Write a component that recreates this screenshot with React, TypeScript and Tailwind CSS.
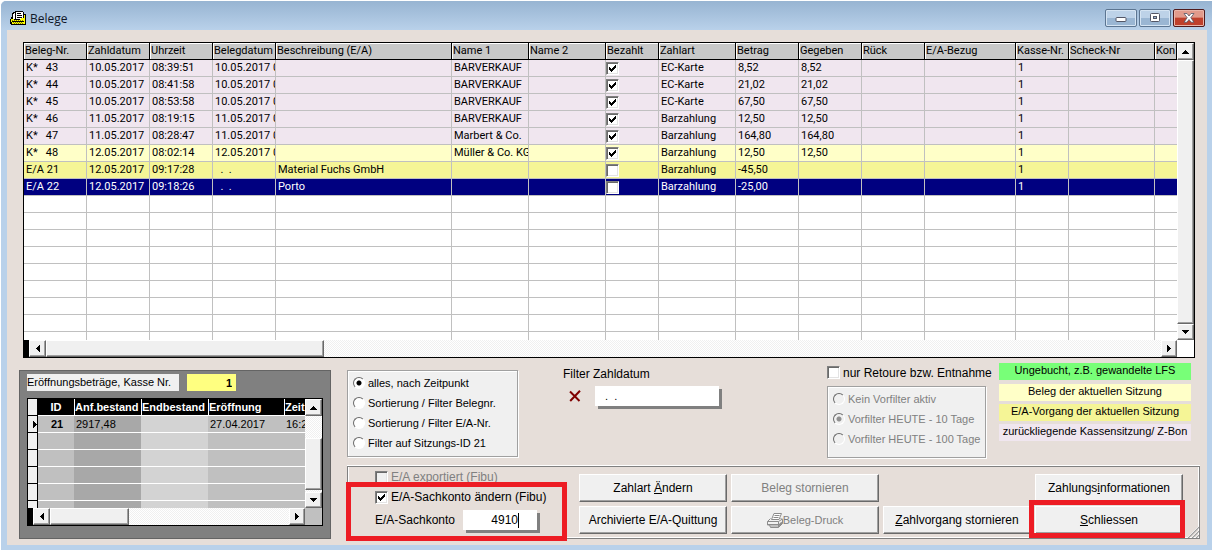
import type { ReactNode } from 'react';
import clsx from 'clsx';

type RowKind = 'past' | 'current' | 'ea' | 'selected';

interface Beleg {
  kind: RowKind;
  nr: string;
  zahldatum: string;
  uhrzeit: string;
  belegdatum: string;
  beschreibung?: string;
  name?: string;
  bezahlt: boolean;
  zahlart: string;
  betrag: string;
  gegeben?: string;
}

const belege: Beleg[] = [
  { kind: 'past', nr: 'K*   43', zahldatum: '10.05.2017', uhrzeit: '08:39:51', belegdatum: '10.05.2017 0', name: 'BARVERKAUF', bezahlt: true, zahlart: 'EC-Karte', betrag: '8,52', gegeben: '8,52' },
  { kind: 'past', nr: 'K*   44', zahldatum: '10.05.2017', uhrzeit: '08:41:58', belegdatum: '10.05.2017 0', name: 'BARVERKAUF', bezahlt: true, zahlart: 'EC-Karte', betrag: '21,02', gegeben: '21,02' },
  { kind: 'past', nr: 'K*   45', zahldatum: '10.05.2017', uhrzeit: '08:53:58', belegdatum: '10.05.2017 0', name: 'BARVERKAUF', bezahlt: true, zahlart: 'EC-Karte', betrag: '67,50', gegeben: '67,50' },
  { kind: 'past', nr: 'K*   46', zahldatum: '11.05.2017', uhrzeit: '08:19:15', belegdatum: '11.05.2017 0', name: 'BARVERKAUF', bezahlt: true, zahlart: 'Barzahlung', betrag: '12,50', gegeben: '12,50' },
  { kind: 'past', nr: 'K*   47', zahldatum: '11.05.2017', uhrzeit: '08:28:47', belegdatum: '11.05.2017 0', name: 'Marbert & Co.', bezahlt: true, zahlart: 'Barzahlung', betrag: '164,80', gegeben: '164,80' },
  { kind: 'current', nr: 'K*   48', zahldatum: '12.05.2017', uhrzeit: '08:02:14', belegdatum: '12.05.2017 0', name: 'Müller & Co. KG', bezahlt: true, zahlart: 'Barzahlung', betrag: '12,50', gegeben: '12,50' },
  { kind: 'ea', nr: 'E/A 21', zahldatum: '12.05.2017', uhrzeit: '09:17:28', belegdatum: '  .  .', beschreibung: 'Material Fuchs GmbH', bezahlt: false, zahlart: 'Barzahlung', betrag: '-45,50' },
  { kind: 'selected', nr: 'E/A 22', zahldatum: '12.05.2017', uhrzeit: '09:18:26', belegdatum: '  .  .', beschreibung: 'Porto', bezahlt: false, zahlart: 'Barzahlung', betrag: '-25,00' },
];

const rowStyle: Record<RowKind, string> = {
  past: 'bg-[#f0e6ef]',
  current: 'bg-[#ffffc8]',
  ea: 'bg-[#f5f596]',
  selected: 'bg-[#000080] text-white',
};

// the last column takes whatever is left
const columns = [
  { title: 'Beleg-Nr.', width: 'w-[63px]' },
  { title: 'Zahldatum', width: 'w-[63px]' },
  { title: 'Uhrzeit', width: 'w-[63px]' },
  { title: 'Belegdatum', width: 'w-[63px]' },
  { title: 'Beschreibung (E/A)', width: 'w-[176px]' },
  { title: 'Name 1', width: 'w-[77px]' },
  { title: 'Name 2', width: 'w-[77px]' },
  { title: 'Bezahlt', width: 'w-[53px]' },
  { title: 'Zahlart', width: 'w-[77px]' },
  { title: 'Betrag', width: 'w-[63px]' },
  { title: 'Gegeben', width: 'w-[63px]' },
  { title: 'Rück', width: 'w-[63px]' },
  { title: 'E/A-Bezug', width: 'w-[91px]' },
  { title: 'Kasse-Nr.', width: 'w-[53px]' },
  { title: 'Scheck-Nr', width: 'w-[86px]' },
  { title: 'Kon', width: '' },
];

const legend = [
  { text: 'Ungebucht, z.B. gewandelte LFS', style: 'bg-[#78ff78] mb-1' },
  { text: 'Beleg der aktuellen Sitzung', style: 'bg-[#ffffc8] mb-[3px]' },
  { text: 'E/A-Vorgang der aktuellen Sitzung', style: 'bg-[#f5f596] mb-[3px]' },
  { text: 'zurückliegende Kassensitzung/ Z-Bon', style: 'bg-[#f0e6ef]' },
];

const raised =
  'bg-[#f0f0f0] border border-t-white border-l-white border-r-[#696969] border-b-[#696969] shadow-[inset_-1px_-1px_0_#a0a0a0]';

const track = 'bg-[repeating-conic-gradient(#ffffff_0_25%,#f0f0f0_0_50%)] bg-[length:2px_2px]';

function Check({ checked, label, disabled }: { checked?: boolean; label?: string; disabled?: boolean }) {
  return (
    <span className="relative block size-[13px] shrink-0">
      <input
        type="checkbox"
        aria-label={label}
        defaultChecked={checked}
        disabled={disabled}
        className="peer block size-[13px] appearance-none border border-t-[#808080] border-l-[#808080] border-r-white border-b-white bg-white shadow-[inset_1px_1px_0_#696969,inset_-1px_-1px_0_#e3e3e3] disabled:bg-[#f0f0f0]"
      />
      <svg
        viewBox="0 0 13 13"
        shapeRendering="crispEdges"
        className="pointer-events-none absolute inset-0 hidden size-[13px] peer-checked:block"
      >
        <path d="M3 5h1v1h1v1h1v-1h1v-1h1v-1h1v-1h1v3h-1v1h-1v1h-1v1h-1v1h-1v-1h-1v-1h-1z" fill="#000" />
      </svg>
    </span>
  );
}

function Radio({ name, children, checked, disabled }: { name: string; children: ReactNode; checked?: boolean; disabled?: boolean }) {
  return (
    <label className={clsx('flex h-5 items-center gap-[3px] text-[11px]', disabled && 'text-[#808080]')}>
      <input
        type="radio"
        name={name}
        defaultChecked={checked}
        disabled={disabled}
        className="size-3 shrink-0 appearance-none rounded-full border border-t-[#696969] border-l-[#696969] border-r-white border-b-white bg-white checked:bg-[radial-gradient(circle,#000_2px,#fff_3px)] disabled:bg-[#f0f0f0] checked:disabled:bg-[radial-gradient(circle,#909090_2px,#f0f0f0_3px)]"
      />
      {children}
    </label>
  );
}

const arrows = {
  up: 'M4 0h1v1h1v1h1v1h1v1H1V3h1V2h1V1h1z',
  down: 'M1 0h7v1h-1v1h-1v1h-1v1h-1V3H3V2H2V1H1z',
  left: 'M3 1h1v7h-1V7h-1V6h-1V5h-1V4h1V3h1V2h1z',
  right: 'M0 1h1v1h1v1h1v1h1v1h-1v1h-1v1h-1v1H0z',
};

function ArrowButton({ dir, className }: { dir: keyof typeof arrows; className?: string }) {
  const vertical = dir === 'up' || dir === 'down';
  return (
    <button type="button" aria-label={`scroll ${dir}`} className={clsx(raised, 'flex shrink-0 items-center justify-center', className)}>
      <svg
        viewBox={vertical ? '0 0 9 4' : '0 0 4 9'}
        shapeRendering="crispEdges"
        className={vertical ? 'h-1 w-[9px]' : 'h-[9px] w-1'}
      >
        <path d={arrows[dir]} />
      </svg>
    </button>
  );
}

function PushButton({ children, disabled }: { children: ReactNode; disabled?: boolean }) {
  return (
    <button
      type="button"
      disabled={disabled}
      className={clsx(raised, 'flex h-7 w-full items-center justify-center text-[12px] whitespace-nowrap disabled:text-[#808080]')}
    >
      {children}
    </button>
  );
}

function FolderIcon() {
  return (
    <svg viewBox="0 0 16 14" shapeRendering="crispEdges" className="h-[14px] w-4">
      <path d="M5 0h8v1h1v2h2v11H1v-1H0V8h1V6h1V2h1V1h2z" fill="#000" />
      <path d="M3 3h1v5H3zM4 2h1v6H4zM6 1h7v7H6z" fill="#fff" />
      <path d="M5 2h1v6H5zM7 2h4v1H7zM7 4h5v1H7zM7 6h5v1H7z" fill="#000" />
      <path d="M1 8h3v1h6V8h1V7h3V4h1v9H2v-2H1z" fill="#ffff00" />
      <path d="M2 10h12v1H2z" fill="#000" />
      <path d="M3 11h1v1H3zM5 11h1v1H5zM7 11h1v1H7zM9 11h1v1H9zM11 11h1v1h-1zM4 12h1v1H4zM6 12h1v1H6zM8 12h1v1H8zM10 12h1v1h-1zM12 12h1v1h-1zM2 9h1v1H2zM4 9h1v1H4zM6 9h1v1H6zM8 9h1v1H8zM10 9h1v1h-1zM12 9h1v1h-1z" fill="#808000" />
    </svg>
  );
}

function PrinterIcon() {
  return (
    <svg viewBox="0 0 16 15" className="h-[15px] w-4" fill="none" stroke="#8c8c8c">
      <path d="M4.500 6.500 7 .5h7.500L12 6.500z" fill="#fff" />
      <path d="M7.500 2.500h5M6.500 4.500h5" />
      <path d="M3.500 5.500.500 8.500v3.500h2l1 2.500h8l4-4V6.500l-2-1" />
      <path d="M.500 8.500h11l4-2.500M11.500 8.500v6M1 11.500h10M3 13h8" />
      <path d="m12 12.500 3-3" strokeWidth="2" />
    </svg>
  );
}

function TitleBar() {
  return (
    <header className="flex h-[30px] items-start bg-linear-to-b from-[#96b3d1] to-[#b9d1ea] pr-[7px] pl-[9px]">
      <div className="mt-[11px]">
        <FolderIcon />
      </div>
      <h1 className="mt-[11px] ml-1 flex-1 font-['Open_Sans',sans-serif] text-[12px] leading-4 text-[#101828]">Belege</h1>
      <div className="mt-[9px] flex gap-[2px]">
        <button
          type="button"
          aria-label="Minimieren"
          className="flex h-[18px] w-8 items-center justify-center rounded-[2px] border border-[#5c7591] bg-linear-to-b from-[#bdd2e8] from-50% to-[#9ab6d3] to-50% shadow-[inset_0_0_0_1px_#d5e4f3]"
        >
          <svg viewBox="0 0 12 10" className="h-[10px] w-3">
            <rect x="1" y="4.500" width="10" height="4" rx="1" fill="#fff" stroke="#535666" />
          </svg>
        </button>
        <button
          type="button"
          aria-label="Maximieren"
          className="flex h-[18px] w-8 items-center justify-center rounded-[2px] border border-[#5c7591] bg-linear-to-b from-[#bdd2e8] from-50% to-[#9ab6d3] to-50% shadow-[inset_0_0_0_1px_#d5e4f3]"
        >
          <svg viewBox="0 0 12 10" className="h-[10px] w-3">
            <rect x="1.500" y=".5" width="9" height="8" rx="1" fill="#fff" stroke="#535666" />
            <rect x="4.500" y="3.500" width="3" height="2" fill="#9ab6d3" stroke="#535666" />
          </svg>
        </button>
        <button
          type="button"
          aria-label="Fenster schliessen"
          className="flex h-[18px] w-8 items-center justify-center rounded-[2px] border border-[#4f1a1c] bg-linear-to-b from-[#e19a8b] from-45% to-[#bf402c] to-50% shadow-[inset_0_0_0_1px_#eab5a9]"
        >
          <svg viewBox="0 0 12 10" className="h-[10px] w-3">
            <path d="M1 .5h3l2 2.500 2-2.500h3L7.800 4.700 11 9.200H8L6 6.500 4 9.200H1l3.200-4.500z" fill="#fff" stroke="#535666" strokeWidth=".8" />
          </svg>
        </button>
      </div>
    </header>
  );
}

function BelegTable() {
  const cell = 'h-[17px] overflow-hidden border-r border-b border-[#c0c0c0] p-0 pl-[2px] leading-4 whitespace-pre last:border-r-0';

  return (
    <section className="mr-3 ml-4 border border-black bg-white font-[Roboto,Arial,sans-serif] text-[11px]">
      <div className="flex">
        <div className="h-[297px] min-w-0 flex-1 overflow-hidden">
          <table className="w-full table-fixed border-separate border-spacing-0">
            <thead>
              <tr>
                {columns.map((col) => (
                  <th
                    key={col.title}
                    className={clsx(
                      col.width,
                      'h-[17px] overflow-hidden border-r border-b border-black bg-[#c8c8c8] p-0 pl-px text-left leading-4 font-normal whitespace-nowrap shadow-[inset_1px_1px_0_#fff]'
                    )}
                  >
                    {col.title}
                  </th>
                ))}
              </tr>
            </thead>
            <tbody>
              {belege.map((b) => (
                <tr key={b.nr} className={rowStyle[b.kind]}>
                  <td className={cell}>{b.nr}</td>
                  <td className={cell}>{b.zahldatum}</td>
                  <td className={cell}>{b.uhrzeit}</td>
                  <td className={cell}>{b.belegdatum}</td>
                  <td className={cell}>{b.beschreibung}</td>
                  <td className={cell}>{b.name}</td>
                  <td className={cell} />
                  <td className="h-[17px] border-r border-b border-[#c0c0c0] p-0">
                    <Check checked={b.bezahlt} label={`Bezahlt ${b.nr}`} />
                  </td>
                  <td className={cell}>{b.zahlart}</td>
                  <td className={cell}>{b.betrag}</td>
                  <td className={cell}>{b.gegeben}</td>
                  <td className={cell} />
                  <td className={cell} />
                  <td className={cell}>1</td>
                  <td className={cell} />
                  <td className={cell} />
                </tr>
              ))}
              {Array.from({ length: 9 }, (_, i) => (
                <tr key={i}>
                  {columns.map((col) => (
                    <td key={col.title} className={cell} />
                  ))}
                </tr>
              ))}
            </tbody>
          </table>
        </div>
        <div className="flex w-[17px] flex-col">
          <ArrowButton dir="up" className="h-[17px]" />
          <div className={clsx(raised, 'flex-1')} />
          <ArrowButton dir="down" className="h-4" />
        </div>
      </div>
      <div className="flex h-[17px]">
        <div className="w-[5px] bg-black" />
        <ArrowButton dir="left" className="w-[17px]" />
        <div className={clsx('flex-1', track)}>
          <div className={clsx(raised, 'h-full w-[278px]')} />
        </div>
        <ArrowButton dir="right" className="w-4" />
        <div className="w-[17px] bg-white" />
      </div>
    </section>
  );
}

function OpeningBalances() {
  const head = 'h-[17px] overflow-hidden border-b border-l border-white bg-black p-0 text-left font-bold text-white whitespace-nowrap leading-4';
  const body = 'h-[17px] overflow-hidden border-b border-white p-0 pl-[2px] whitespace-nowrap leading-4';

  return (
    <section className="mt-[7px] w-[312px] shrink-0 border border-[#646464] bg-[#808080] px-[7px] pt-[3px] text-[11px]">
      <div className="flex gap-2">
        <label htmlFor="kasse" className="h-[17px] w-[152px] bg-[#f0f0f0] leading-4">
          Eröffnungsbeträge, Kasse Nr.
        </label>
        <input id="kasse" defaultValue="1" className="h-[17px] w-[49px] bg-[#ffff80] pr-1 text-right font-bold" />
      </div>
      <div className="mt-[7px] border border-black bg-[#c0c0c0]">
        <div className="flex">
          <div className="h-[109px] min-w-0 flex-1 overflow-hidden">
            <table className="w-full table-fixed border-separate border-spacing-0">
              <thead>
                <tr>
                  <th className="h-[17px] w-[10px] border-r border-b border-black bg-[#f0f0f0] p-0" />
                  <th className="h-[17px] w-9 border-b border-white bg-black p-0 text-center leading-4 font-bold text-white">ID</th>
                  <th className={clsx(head, 'w-[67px]')}>Anf.bestand</th>
                  <th className={clsx(head, 'w-[67px]')}>Endbestand</th>
                  <th className={clsx(head, 'w-[76px]')}>Eröffnung</th>
                  <th className={head}>Zeit</th>
                </tr>
              </thead>
              <tbody>
                {Array.from({ length: 6 }, (_, i) => (
                  <tr key={i}>
                    <td className="h-[17px] border-r border-b border-black bg-[#f0f0f0] p-0 pl-[5px]">
                      {i === 0 && (
                        <svg viewBox="0 0 4 9" shapeRendering="crispEdges" className="h-[9px] w-1">
                          <path d={arrows.right} />
                        </svg>
                      )}
                    </td>
                    <td className={clsx(body, 'bg-[#c0c0c0] text-center font-bold')}>{i === 0 && '21'}</td>
                    <td className={clsx(body, 'bg-[#a8a8a8]')}>{i === 0 && '2917,48'}</td>
                    <td className={clsx(body, 'bg-[#d3d3d3]')} />
                    <td className={clsx(body, 'bg-[#c0c0c0]')}>{i === 0 && '27.04.2017'}</td>
                    <td className={clsx(body, 'bg-[#c0c0c0]')}>{i === 0 && '16:2'}</td>
                  </tr>
                ))}
              </tbody>
            </table>
          </div>
          <div className={clsx('flex w-[17px] flex-col', track)}>
            <ArrowButton dir="up" className="h-[17px]" />
            <div className={clsx(raised, 'mt-[22px] mb-[2px] flex-1')} />
            <ArrowButton dir="down" className="h-4" />
          </div>
        </div>
        <div className="flex h-[17px]">
          <div className="w-[5px] bg-black" />
          <ArrowButton dir="left" className="w-[17px]" />
          <div className={clsx('flex-1', track)}>
            <div className={clsx(raised, 'h-full w-[79px]')} />
          </div>
          <ArrowButton dir="right" className="w-4" />
          <div className="w-[17px]" />
        </div>
      </div>
    </section>
  );
}

function Filters() {
  return (
    <div className="flex items-start pr-[9px]">
      <div className="mt-[7px] h-[87px] w-[171px] border border-[#a0a0a0] bg-[#f0f0f0] pt-[2px] pl-[5px] shadow-[1px_1px_0_#fff,inset_1px_1px_0_#fff]">
        <Radio name="sort" checked>alles, nach Zeitpunkt</Radio>
        <Radio name="sort">Sortierung / Filter Belegnr.</Radio>
        <Radio name="sort">Sortierung / Filter E/A-Nr.</Radio>
        <Radio name="sort">Filter auf Sitzungs-ID 21</Radio>
      </div>

      <div className="mt-[3px] ml-[45px]">
        <label htmlFor="zahldatum" className="block text-[12px] leading-4">Filter Zahldatum</label>
        <div className="mt-1 flex items-center">
          <button type="button" aria-label="Filter löschen" className="ml-[6px] size-3">
            <svg viewBox="0 0 12 12" className="size-3">
              <path d="M1 1.500 10.500 11M11 .8 1.200 11" stroke="#800000" strokeWidth="2" fill="none" />
            </svg>
          </button>
          <input
            id="zahldatum"
            defaultValue="  .  ."
            className="ml-[14px] h-5 w-[124px] bg-white pl-1 text-[11px] shadow-[3px_3px_0_#808080]"
          />
        </div>
      </div>

      <div className="mt-[3px] ml-auto w-[166px]">
        <label className="flex h-[13px] items-center gap-[3px] text-[12px] whitespace-nowrap">
          <Check />
          nur Retoure bzw. Entnahme
        </label>
        <div className="mt-[7px] h-[72px] w-[159px] border border-[#a0a0a0] bg-[#f0f0f0] pt-[2px] pl-[5px] shadow-[1px_1px_0_#fff,inset_1px_1px_0_#fff]">
          <Radio name="vorfilter" disabled>Kein Vorfilter aktiv</Radio>
          <Radio name="vorfilter" disabled checked>Vorfilter HEUTE - 10 Tage</Radio>
          <Radio name="vorfilter" disabled>Vorfilter HEUTE - 100 Tage</Radio>
        </div>
      </div>

      <ul className="ml-[6px] w-48 text-center text-[11px]">
        {legend.map((item) => (
          <li key={item.text} className={clsx('h-[17px] leading-[15px] whitespace-nowrap', item.style)}>
            {item.text}
          </li>
        ))}
      </ul>
    </div>
  );
}

function Actions() {
  return (
    <div className="relative mt-2 flex justify-between border border-[#808080] pb-1 pl-[27px] shadow-[0_-1px_0_#fff,inset_1px_-1px_0_#fff,inset_-1px_0_0_#fff]">
      <div className="text-[12px]">
        <label className="flex h-5 items-center gap-[3px] text-[#808080]">
          <Check disabled />
          E/A exportiert (Fibu)
        </label>
        <label className="flex h-5 items-center gap-[3px]">
          <Check checked />
          E/A-Sachkonto ändern (Fibu)
        </label>
        <div className="mt-[3px] flex h-5 items-center">
          <label htmlFor="sachkonto" className="w-[88px]">E/A-Sachkonto</label>
          <div className="flex h-5 w-[74px] items-center bg-white shadow-[3px_3px_0_#808080]">
            <input id="sachkonto" defaultValue="4910" className="h-5 w-[55px] text-right" />
            <span className="h-[15px] w-px bg-black" />
          </div>
        </div>
      </div>

      <div className="mt-[7px] mr-4 grid grid-cols-[repeat(4,148px)] gap-1">
        <PushButton>
          <span>Zahlart <u>Ä</u>ndern</span>
        </PushButton>
        <PushButton disabled>Beleg stornieren</PushButton>
        <div className="col-start-4">
          <PushButton>
            <span>Zahlungs<u>i</u>nformationen</span>
          </PushButton>
        </div>
        <PushButton>Archivierte E/A-Quittung</PushButton>
        <PushButton disabled>
          <PrinterIcon />
          <span className="text-[11px]">Beleg-Druck</span>
        </PushButton>
        <PushButton>
          <span><u>Z</u>ahlvorgang stornieren</span>
        </PushButton>
        <div className="relative">
          <PushButton>
            <span><u>S</u>chliessen</span>
          </PushButton>
          <div className="pointer-events-none absolute -top-[6px] -right-[2px] -bottom-1 -left-[6px] border-5 border-[#ed1c24]" />
        </div>
      </div>

      <div className="pointer-events-none absolute top-[15px] -left-[2px] h-[59px] w-[221px] border-5 border-[#ed1c24]" />
      <svg viewBox="0 0 12 12" className="absolute right-0 bottom-0 size-3">
        <path d="M1 12 12 1M5 12l7-7M9 12l3-3" stroke="#a0a0a0" strokeWidth="1.500" />
        <path d="M0 12 12 0M4 12l8-8M8 12l4-4" stroke="#fff" strokeWidth=".7" />
      </svg>
    </div>
  );
}

export default function App() {
  return (
    <div className="overflow-hidden rounded-tl-[6px] border-t border-l border-white bg-[#b9d1ea] font-['Liberation_Sans',Arial,sans-serif] text-black">
      <div className="-mt-px">
        <TitleBar />
        <main className="mr-[5px] mb-[5px] ml-[6px] bg-[#e6ded9] pt-3 pb-[6px]">
          <BelegTable />
          <div className="flex gap-4 pt-[5px] pr-[7px] pl-3">
            <OpeningBalances />
            <div className="min-w-0 flex-1">
              <Filters />
              <Actions />
            </div>
          </div>
        </main>
      </div>
    </div>
  );
}
